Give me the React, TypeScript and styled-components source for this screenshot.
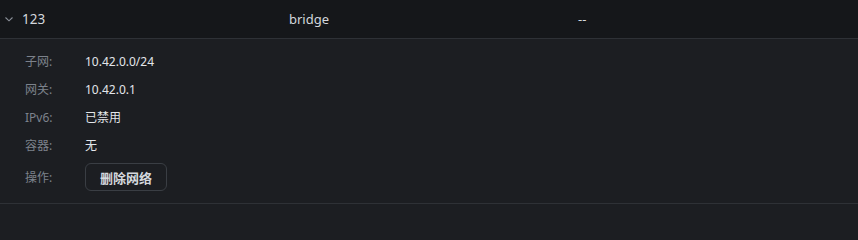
import styled, { createGlobalStyle } from 'styled-components';

const GlobalStyle = createGlobalStyle`
  *, *::before, *::after {
    box-sizing: border-box;
  }
  html, body {
    margin: 0;
    padding: 0;
    background: #1c1e22;
    overflow: hidden;
  }
  body {
    font-family: "Noto Sans", "Noto Sans CJK SC", sans-serif;
  }
`

const details = [
  { label: '子网:', value: '10.42.0.0/24' },
  { label: '网关:', value: '10.42.0.1' },
  { label: 'IPv6:', value: '已禁用' },
  { label: '容器:', value: '无' },
]

const App = () => {
  return (
    <>
      <GlobalStyle />
      <Wrapper>
        <HeaderRow>
          <NameCell>
            <Chevron viewBox="0 0 10 10">
              <path d="M1.5 3.5 L5 6.8 L8.5 3.5" />
            </Chevron>
            <span>123</span>
          </NameCell>
          <Cell>bridge</Cell>
          <Cell>--</Cell>
        </HeaderRow>

        <Details>
          {details.map((d) => (
            <DetailRow key={d.label}>
              <Label>{d.label}</Label>
              <Value>{d.value}</Value>
            </DetailRow>
          ))}
          <ActionRow>
            <Label>操作:</Label>
            <DeleteButton>删除网络</DeleteButton>
          </ActionRow>
        </Details>
      </Wrapper>
    </>
  )
}

export default App;

const Wrapper = styled.div`
  width: 100%;
  height: 229px;
  background: #1c1e22;
`
const HeaderRow = styled.div`
  display: grid;
  grid-template-columns: 285px 289px 1fr;
  align-items: center;
  height: 39px;
  padding-left: 4px;
  background: #15171a;
  border-bottom: 1px solid #2e3136;
  color: #d3d7dd;
  font-size: 13px;
`
const NameCell = styled.div`
  display: flex;
  align-items: center;
  gap: 8px;
  font-size: 13.5px;
`
const Cell = styled.div``
const Chevron = styled.svg`
  width: 10px;
  height: 10px;
  fill: none;
  stroke: #8b9099;
  stroke-width: 1.1;
`
const Details = styled.div`
  display: flex;
  flex-direction: column;
  padding: 8px 0 12px 25px;
  border-bottom: 1px solid #2e3136;
`
const DetailRow = styled.div`
  display: flex;
  align-items: center;
  height: 28px;
  font-size: 12px;
`
const ActionRow = styled(DetailRow)`
  height: 28px;
  margin-top: 4px;
`
const Label = styled.span`
  width: 60px;
  color: #7c828c;
`
const Value = styled.span`
  color: #e3e6ea;
`
const DeleteButton = styled.button`
  height: 28px;
  width: 82px;
  padding: 0;
  border: 1px solid #3a3e44;
  border-radius: 6px;
  background: transparent;
  color: #d4d8de;
  font-family: "Noto Sans", "Noto Sans CJK SC", sans-serif;
  font-size: 13px;
  font-weight: 700;
`
